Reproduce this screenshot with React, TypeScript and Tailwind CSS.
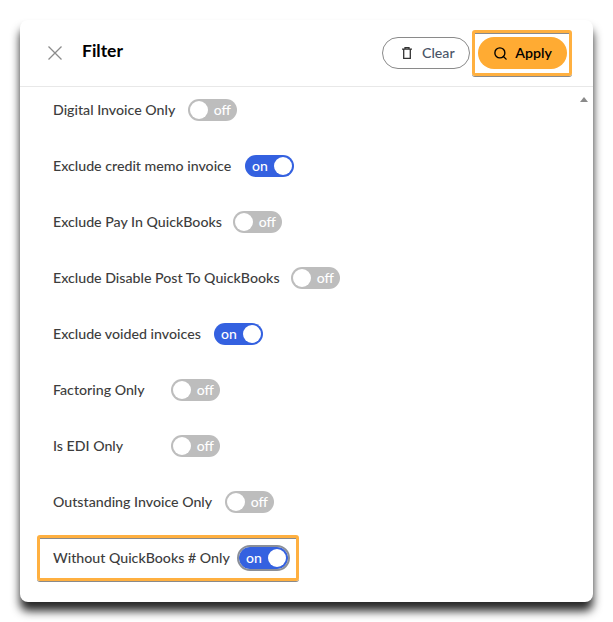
import { Search } from "lucide-react";

const filters = [
  { label: "Digital Invoice Only", on: false, width: "w-[124px]" },
  { label: "Exclude credit memo invoice", on: true, width: "w-[181px]" },
  { label: "Exclude Pay In QuickBooks", on: false, width: "w-[169px]" },
  { label: "Exclude Disable Post To QuickBooks", on: false, width: "w-[227px]" },
  { label: "Exclude voided invoices", on: true, width: "w-[150px]" },
  { label: "Factoring Only", on: false, width: "w-[107px]" },
  { label: "Is EDI Only", on: false, width: "w-[107px]" },
  { label: "Outstanding Invoice Only", on: false, width: "w-[161px]" },
  { label: "Without QuickBooks # Only", on: true, width: "w-[175px]", highlight: true },
];

function Toggle({ on, focused }: { on: boolean; focused?: boolean }) {
  return (
    <span
      className={`flex h-[22px] w-[49px] items-center rounded-full ${
        on ? "justify-between bg-[#3461e0] pl-[7px] pr-[2px] text-white" : "bg-[#bdbdbd] pl-[2px] pr-[6px] text-white"
      } ${focused ? "outline-2 outline-[#8a8f99]" : ""}`}
    >
      {on ? (
        <>
          <span className="text-[14px] leading-none font-medium">on</span>
          <span className="h-[18px] w-[18px] rounded-full bg-white" />
        </>
      ) : (
        <>
          <span className="h-[18px] w-[18px] rounded-full bg-white" />
          <span className="ml-auto text-[14px] leading-none font-medium">off</span>
        </>
      )}
    </span>
  );
}

export default function App() {
  return (
    <div className="min-h-[622px] bg-white p-[20px] font-['Lato','Noto_Sans',sans-serif]">
      <div className="w-[573px] rounded-[8px] bg-white shadow-[0_9px_10px_rgba(0,0,0,0.85)]">
        <header className="flex h-[67px] items-center border-b border-[#e8e8e8] pl-[28px] pr-[21px]">
          <svg width="14" height="14" viewBox="0 0 14 14" fill="none" stroke="#8c8c8c" strokeWidth="1.3">
            <path d="M.5.5l13 13M13.5.5l-13 13" />
          </svg>
          <h1 className="ml-[20px] -mt-[3px] text-[17.5px] font-bold text-black">Filter</h1>
          <div className="ml-auto flex items-center gap-[2px]">
            <button className="flex h-[32px] w-[88px] items-center gap-[10px] rounded-full border border-[#8a8a8a] pl-[19px] text-[14.2px] font-medium text-[#4a5568]">
              <svg width="10" height="12" viewBox="0 0 10 12" fill="none" stroke="#333333" strokeWidth="1.3">
                <path d="M0 2.2h10M3 2.2V.7h4v1.5M1.7 2.2v9.1h6.6V2.2" />
              </svg>
              Clear
            </button>
            <div className="rounded-[3px] border-[3px] border-[#ffb040] py-[4px] pl-[3px] pr-[2px] shadow-[0_1px_0_#8a8a8a,inset_0_1px_0_#8a8a8a]">
              <button className="flex h-[32px] w-[89px] items-center justify-center gap-[7px] rounded-full bg-[#ffab33] text-[14.2px] font-semibold text-black">
                <Search className="h-[15px] w-[15px]" strokeWidth={2.2} />
                Apply
              </button>
            </div>
          </div>
        </header>
        <div className="flex">
          <ul className="flex flex-1 flex-col gap-[34px] pt-[12px] pb-[33px] pl-[33px]">
            {filters.map((f) => (
              <li key={f.label} className="relative flex h-[22px] w-max items-center gap-[11px]">
                {f.highlight && (
                  <span className="absolute -top-[12px] -bottom-[12px] -left-[16px] -right-[11px] rounded-[3px] border-[3px] border-[#ffb040] shadow-[0_1px_0_#8a8a8a,inset_0_1px_0_#8a8a8a]" />
                )}
                <span className={`${f.width} whitespace-nowrap text-[14.2px] font-medium text-[#3d3d3d]`}>{f.label}</span>
                <Toggle on={f.on} focused={f.highlight} />
              </li>
            ))}
          </ul>
          <div className="flex w-[17px] justify-center pt-[10px] pr-[2px]">
            <span className="h-0 w-0 border-x-[4px] border-b-[5px] border-x-transparent border-b-[#8a8a8a]" />
          </div>
        </div>
      </div>
    </div>
  );
}
